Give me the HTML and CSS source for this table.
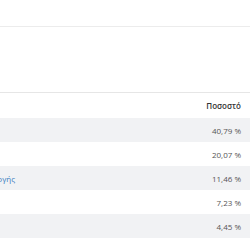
FILE: index.html
```html
<!DOCTYPE html>
<html lang="el">
<head>
<meta charset="utf-8">
<link rel="stylesheet" href="styles.css">
</head>
<body>
<div class="top"></div>
<div class="panel"></div>
<div class="wrap">
<table class="stats">
<thead>
<tr><th class="name"></th><th class="pct">Ποσοστό</th></tr>
</thead>
<tbody>
<tr><td class="name"></td><td class="pct">40,79 %</td></tr>
<tr><td class="name"></td><td class="pct">20,07 %</td></tr>
<tr><td class="name"><a href="#">ομολογής</a></td><td class="pct">11,46 %</td></tr>
<tr><td class="name"></td><td class="pct">7,23 %</td></tr>
<tr><td class="name"></td><td class="pct">4,45 %</td></tr>
</tbody>
</table>
</div>
</body>
</html>
```
FILE: styles.css
```css
html, body {
  margin: 0;
  padding: 0;
  background: #fff;
  font-family: "Open Sans", "Noto Sans", sans-serif;
  overflow: hidden;
}
.top {
  height: 26px;
  border-bottom: 1px solid #ececec;
}
.panel {
  height: 65px;
  border-bottom: 1px solid #e6e6e6;
}
.wrap {
  margin-left: -100px;
}
.stats {
  width: 350px;
  table-layout: fixed;
  border-collapse: collapse;
  font-size: 8px;
  color: #555;
}
.stats th {
  height: 25px;
  font-weight: 600;
  color: #333;
}
.stats td {
  height: 24px;
}
.stats tbody tr:nth-child(odd) {
  background: #f1f2f4;
}
.name {
  width: 115px;
  padding: 0;
  text-align: right;
  white-space: nowrap;
}
.pct {
  padding: 0 9px;
  text-align: right;
}
.stats a {
  color: #3b7cc0;
  text-decoration: none;
}
```
